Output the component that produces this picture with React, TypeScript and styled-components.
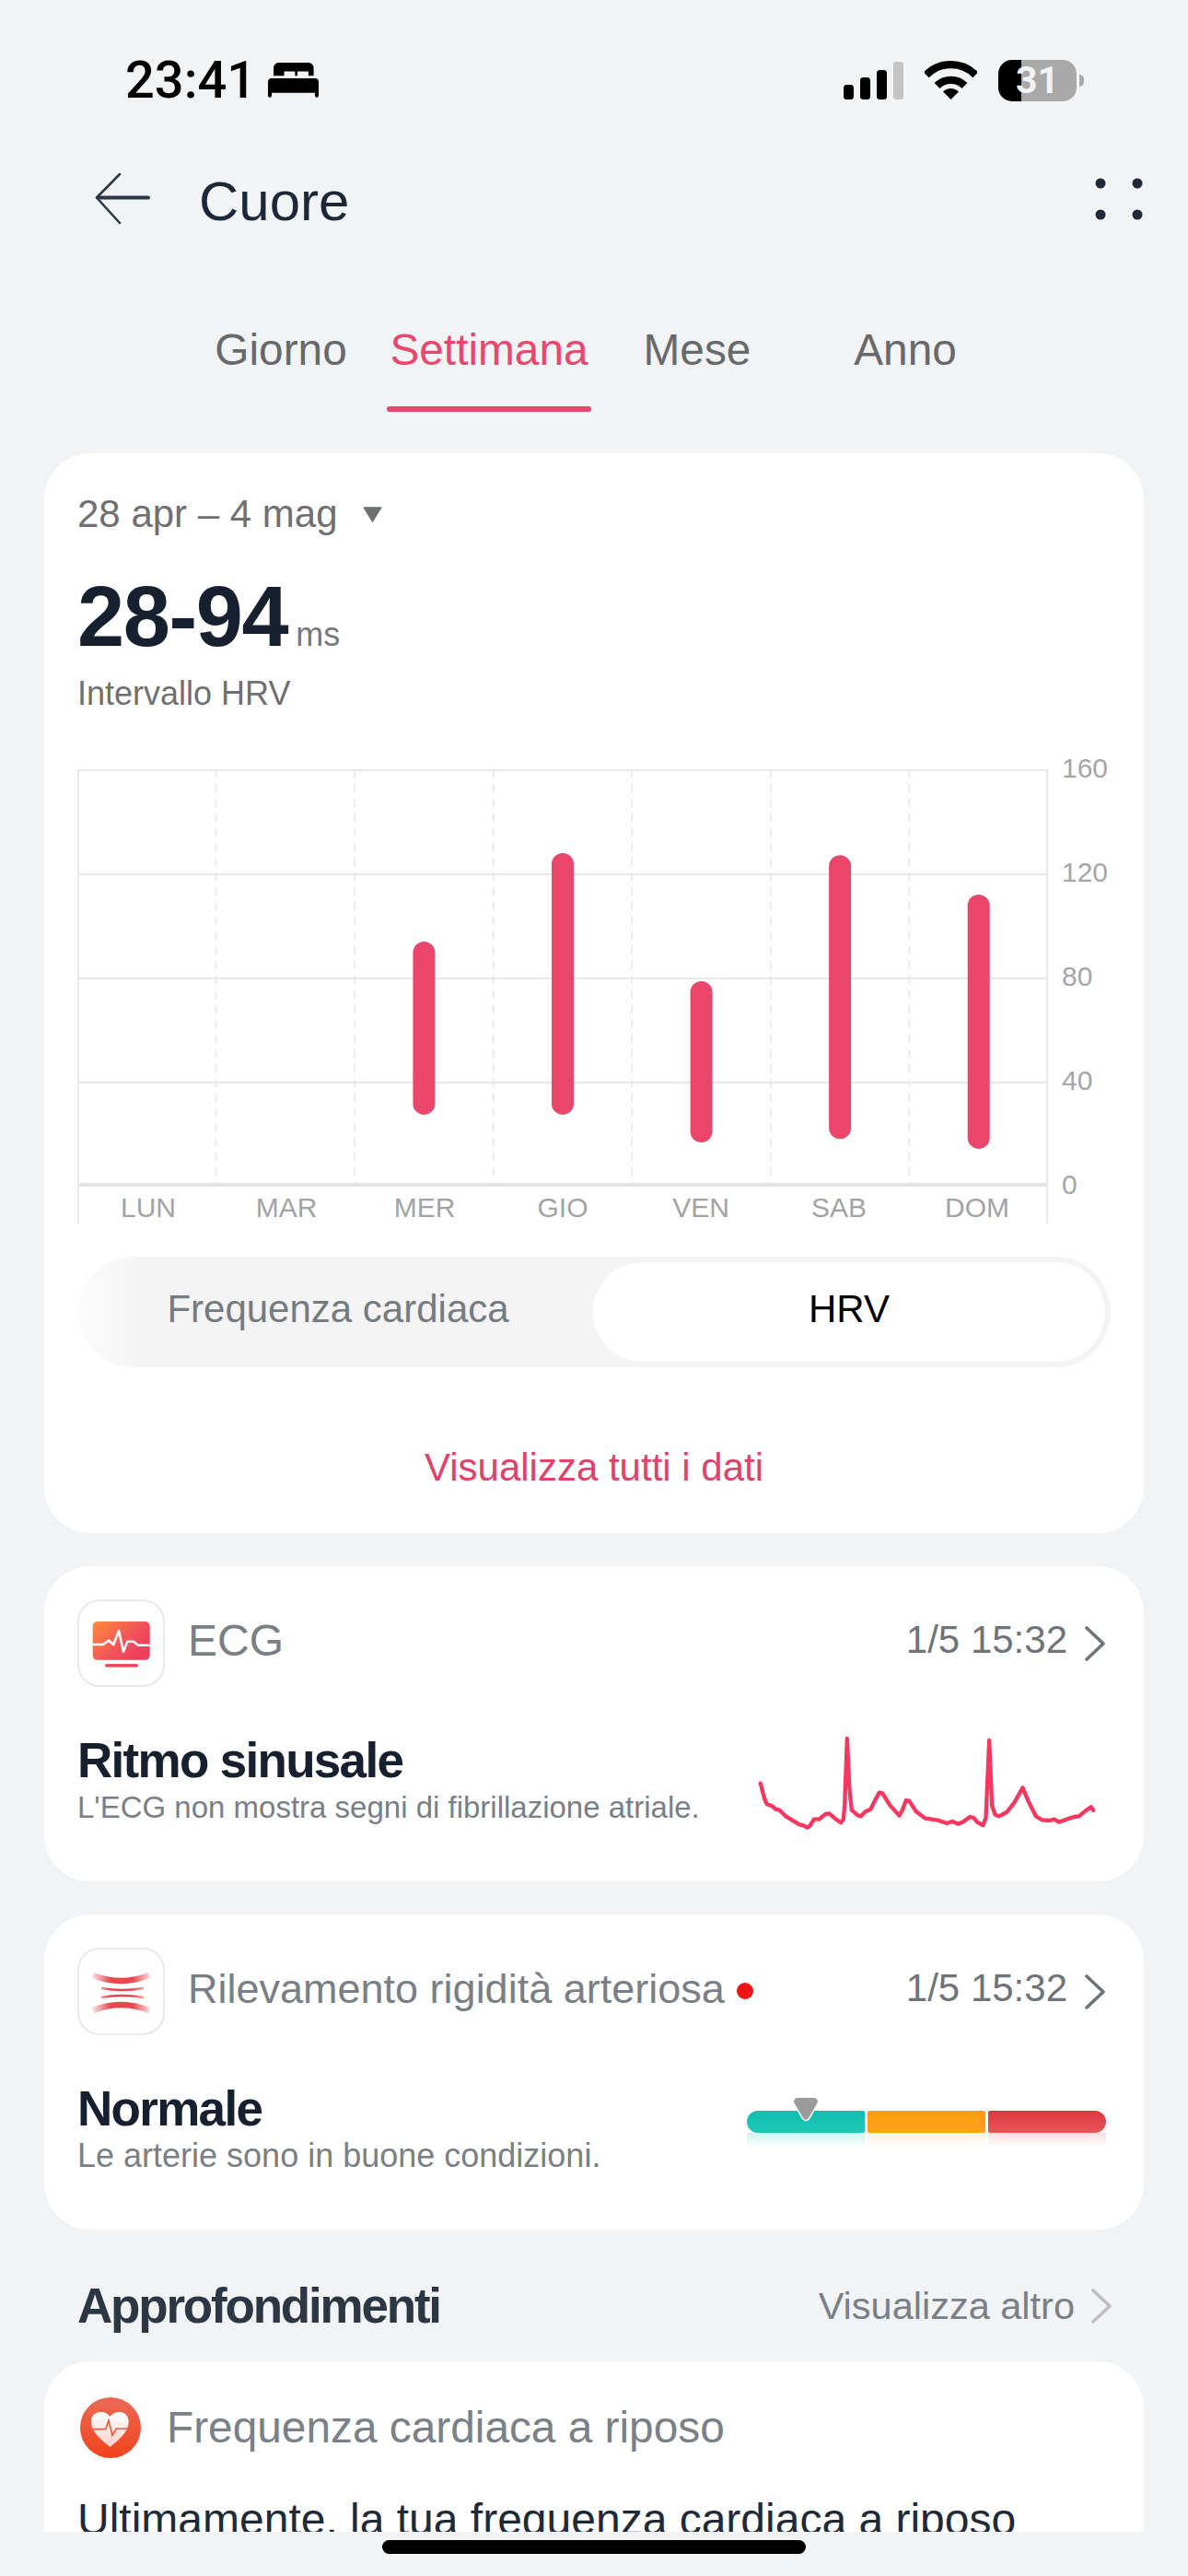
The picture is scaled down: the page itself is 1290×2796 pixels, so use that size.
import React from "react";
import styled, { createGlobalStyle } from "styled-components";

const Global = createGlobalStyle`
  html, body { margin: 0; padding: 0; background: #f2f3f5; }
  * { box-sizing: border-box; }
  body { font-family: "Liberation Sans", Arial, sans-serif; }
`;

const Page = styled.div`
  width: 1290px;
  height: 2796px;
  display: flex;
  flex-direction: column;
  background: #f2f3f5;
  overflow: hidden;
`;
const Main = styled.main`
  height: 2748px;
  overflow: hidden;
  flex: none;
`;
const StatusBar = styled.header`
  height: 174px;
  padding: 0 113px 0 136px;
  display: flex;
  align-items: center;
  justify-content: space-between;
`;
const TimeGroup = styled.div`
  display: flex;
  align-items: center;
  gap: 13px;
`;
const Time = styled.span`
  font-family: Roboto, sans-serif;
  font-weight: 500;
  font-size: 56px;
  line-height: 60px;
  color: #000;
`;
const StatusIcons = styled.div`
  display: flex;
  align-items: center;
  gap: 23px;
`;
const Battery = styled.div`
  position: relative;
  width: 85px;
  height: 45px;
  border-radius: 15px;
  background: linear-gradient(90deg, #000 0 30%, #a9a9a9 30% 100%);
  color: #f2f3f5;
  font-family: Roboto, sans-serif;
  font-weight: 700;
  font-size: 41px;
  line-height: 45px;
  text-align: center;
  margin-right: 8px;
  &::after {
    content: "";
    position: absolute;
    left: 88px;
    top: 16px;
    width: 5px;
    height: 13px;
    border-radius: 0 6px 6px 0;
    background: #a9a9a9;
  }
`;
const TitleBar = styled.div`
  height: 84px;
  padding: 0 49px 0 103px;
  display: flex;
  align-items: center;
`;
const Title = styled.h1`
  margin: 6px 0 0 53px;
  flex: 1;
  font-size: 60px;
  line-height: 70px;
  font-weight: 400;
  color: #1c2838;
`;
const Tabs = styled.nav`
  margin: 96px 0 0 192px;
  display: grid;
  grid-template-columns: repeat(4, 226px);
`;
const Tab = styled.div<{ $active?: boolean }>`
  display: flex;
  flex-direction: column;
  align-items: center;
  font-size: 47.8px;
  line-height: 56px;
  margin-top: -2px;
  color: ${(p) => (p.$active ? "#e8486e" : "#68696c")};
  &::after {
    content: "";
    display: block;
    margin-top: 33px;
    width: 222px;
    height: 6px;
    border-radius: 3px;
    background: ${(p) => (p.$active ? "#e8486e" : "transparent")};
  }
`;
const Card = styled.section`
  margin: 0 48px;
  width: 1194px;
  background: #fff;
  border-radius: 50px;
  padding: 0 36px;
`;
const ChartCard = styled(Card)`
  margin-top: 45px;
  padding-top: 41px;
  padding-bottom: 46px;
`;
const DateRow = styled.div`
  display: flex;
  align-items: center;
  gap: 26px;
  font-size: 42px;
  line-height: 50px;
  color: #6f7072;
`;
const BigRow = styled.div`
  margin-top: 36px;
  display: flex;
  align-items: baseline;
  gap: 9px;
`;
const BigValue = styled.span`
  font-size: 92px;
  line-height: 100px;
  font-weight: 700;
  letter-spacing: -1.4px;
  color: #16202e;
`;
const Unit = styled.span`
  font-size: 36px;
  color: #77787b;
`;
const Caption = styled.div`
  margin-top: 12px;
  font-size: 36px;
  line-height: 44px;
  color: #6f7072;
`;
const ChartGrid = styled.div`
  margin-top: 60px;
  display: grid;
  grid-template-columns: 1054px 1fr;
  column-gap: 15px;
`;
const PlotSvg = styled.svg`
  display: block;
  overflow: visible;
`;
const DayRow = styled.div`
  height: 41px;
  display: grid;
  grid-template-columns: repeat(7, 1fr);
  border-left: 2px solid #e8e8ea;
  border-right: 2px solid #e8e8ea;
`;
const Day = styled.span`
  text-align: center;
  font-size: 30px;
  line-height: 38px;
  padding-top: 5px;
  color: #a3a3a5;
`;
const Axis = styled.div`
  height: 493px;
  margin-top: -58px;
  display: flex;
  flex-direction: column;
`;
const Tick = styled.span`
  flex: none;
  height: 113px;
  line-height: 113px;
  font-size: 30px;
  color: #a6a6a8;
`;
const Segmented = styled.div`
  margin-top: 36px;
  height: 120px;
  border-radius: 60px;
  padding: 6px 6px 6px 6px;
  display: grid;
  grid-template-columns: 554px 556px;
  background: linear-gradient(90deg, #fcfcfc 0, #f4f4f5 6%);
`;
const Segment = styled.div<{ $on?: boolean }>`
  display: flex;
  align-items: center;
  justify-content: center;
  padding-bottom: 6px;
  border-radius: 54px;
  font-size: 42px;
  background: ${(p) => (p.$on ? "#fff" : "transparent")};
  color: ${(p) => (p.$on ? "#000" : "#757b80")};
`;
const AllLink = styled.div`
  margin-top: 84px;
  text-align: center;
  font-size: 42px;
  line-height: 50px;
  color: #e0426a;
`;
const InfoCard = styled(Card)`
  margin-top: 36px;
  height: 342px;
  padding-top: 36px;
`;
const InfoHead = styled.div`
  display: flex;
  align-items: center;
  height: 95px;
`;
const IconBox = styled.div`
  width: 95px;
  height: 95px;
  flex: none;
  border: 2px solid #e9e9eb;
  border-radius: 24px;
  margin-right: 25px;
  display: flex;
`;
const InfoTitle = styled.span<{ $size: number }>`
  font-size: ${(p) => p.$size}px;
  line-height: 54px;
  padding-bottom: 6px;
  color: #7a7f85;
`;
const RedDot = styled.span`
  width: 18px;
  height: 18px;
  border-radius: 50%;
  background: #f01414;
  margin-left: 13px;
  margin-top: -2px;
`;
const Stamp = styled.span`
  margin-left: auto;
  font-size: 42px;
  line-height: 50px;
  padding-bottom: 8px;
  color: #6f7479;
`;
const ChevronWrap = styled.span`
  display: flex;
  margin: 0 6px 0 19px;
`;
const InfoBody = styled.div`
  margin-top: 51px;
  display: flex;
  justify-content: space-between;
  align-items: flex-start;
`;
const Headline = styled.div`
  font-size: 53px;
  line-height: 57px;
  font-weight: 700;
  letter-spacing: -1.7px;
  color: #16202e;
`;
const SubLine = styled.div<{ $gap: number; $size: number }>`
  margin-top: ${(p) => p.$gap}px;
  font-size: ${(p) => p.$size}px;
  line-height: 40px;
  color: #7a7f85;
`;
const Spark = styled.svg`
  display: block;
  margin: 1px 16px 0 0;
`;
const Meter = styled.div`
  position: relative;
  margin: 16px 5px 0 0;
  width: 390px;
  padding-top: 15px;
  display: flex;
  gap: 3px;
`;
const MeterPart = styled.div<{ $from: string; $to: string; $tint: string; $radius: string }>`
  position: relative;
  flex: 1;
  height: 24px;
  border-radius: ${(p) => p.$radius};
  background: linear-gradient(180deg, ${(p) => p.$from}, ${(p) => p.$to});
  &::after {
    content: "";
    position: absolute;
    left: 0;
    right: 0;
    top: 24px;
    height: 17px;
    background: linear-gradient(180deg, ${(p) => p.$tint}, transparent);
  }
`;
const MeterMark = styled.svg`
  position: absolute;
  left: 45px;
  top: -2px;
`;
const SectionHead = styled.div`
  margin-top: 53px;
  padding: 0 83px 0 84px;
  height: 60px;
  display: flex;
  align-items: center;
  justify-content: space-between;
`;
const SectionTitle = styled.h2`
  margin: 0;
  font-size: 53px;
  line-height: 60px;
  font-weight: 700;
  letter-spacing: -2.2px;
  color: #2c3744;
`;
const MoreLink = styled.div`
  display: flex;
  align-items: center;
  gap: 18px;
  font-size: 41.5px;
  color: #7a8087;
`;
const InsightCard = styled(Card)`
  margin-top: 30px;
  padding-top: 39px;
  min-height: 400px;
`;
const InsightHead = styled.div`
  display: flex;
  align-items: center;
  gap: 28px;
  padding-left: 3px;
`;
const InsightTitle = styled.span`
  font-size: 47.8px;
  line-height: 56px;
  color: #7a8087;
`;
const InsightText = styled.p`
  margin: 39px 0 0;
  font-size: 48px;
  line-height: 56px;
  color: #1f2a38;
`;
const HomeZone = styled.div`
  flex: 1;
  display: flex;
  justify-content: center;
  padding-top: 9px;
`;
const HomeBar = styled.div`
  width: 460px;
  height: 15px;
  border-radius: 8px;
  background: #000;
`;

const days = ["LUN", "MAR", "MER", "GIO", "VEN", "SAB", "DOM"];
const ticks = [160, 120, 80, 40, 0];
const bars: { day: number; lo: number; hi: number }[] = [
  { day: 2, lo: 27.3, hi: 93.8 },
  { day: 3, lo: 27.3, hi: 127.8 },
  { day: 4, lo: 16.6, hi: 78.6 },
  { day: 5, lo: 18, hi: 127 },
  { day: 6, lo: 14.2, hi: 111.9 },
];
const ecgPoints =
  "78,228 90,275 98,295 115,302 128,312 140,315 160,335 185,350 205,362 218,365 230,372 240,365 252,345 268,345 290,328 302,326 320,342 340,356 348,345 352,300 360,82 368,250 375,315 395,332 405,335 420,320 437,312 450,285 465,258 475,260 500,300 530,333 540,315 552,283 562,285 585,320 615,342 655,348 685,358 703,352 722,360 740,352 760,337 772,340 785,355 803,364 812,340 823,88 832,300 842,330 855,335 880,322 905,290 932,242 950,285 975,335 995,347 1020,349 1035,345 1050,354 1075,345 1100,337 1115,335 1140,315 1155,305 1162,315";

const Chevron = ({ color = "#6f7479" }: { color?: string }) => (
  <svg width="22" height="38" viewBox="0 0 22 38" fill="none">
    <path d="M2 2 L20 19 L2 36" stroke={color} strokeWidth="3.6" strokeLinecap="round" strokeLinejoin="round" />
  </svg>
);

const Plot = () => (
  <PlotSvg width="1054" height="452" viewBox="0 0 1054 452">
    {[0, 113, 226, 339].map((y) => (
      <line key={y} x1="0" x2="1054" y1={y + 1} y2={y + 1} stroke="#e8e8ea" strokeWidth="2" />
    ))}
    <line x1="0" x2="1054" y1="451" y2="451" stroke="#e4e4e6" strokeWidth="4" />
    {[1, 2, 3, 4, 5, 6].map((i) => (
      <line key={i} x1={i * 150.57} x2={i * 150.57} y1="0" y2="450" stroke="#e6e6e8" strokeWidth="1.5" strokeDasharray="9 7" />
    ))}
    <line x1="1" x2="1" y1="0" y2="452" stroke="#e8e8ea" strokeWidth="2" />
    <line x1="1053" x2="1053" y1="0" y2="452" stroke="#e8e8ea" strokeWidth="2" />
    {bars.map((b) => (
      <rect
        key={b.day}
        x={(b.day + 0.5) * 150.57 - 12}
        y={452 - (b.hi * 452) / 160}
        width="24"
        height={((b.hi - b.lo) * 452) / 160}
        rx="12"
        fill="#ea466c"
      />
    ))}
  </PlotSvg>
);

const EcgIcon = () => (
  <svg width="91" height="91" viewBox="2 2 91 91">
    <defs>
      <linearGradient id="ecgFill" x1="0" y1="0" x2="1" y2="0.7">
        <stop offset="0" stopColor="#ff8c3c" />
        <stop offset="0.65" stopColor="#f0505a" />
        <stop offset="1" stopColor="#ee3d5a" />
      </linearGradient>
    </defs>
    <rect x="16.7" y="24" width="62" height="41.7" rx="5" fill="url(#ecgFill)" />
    <path
      d="M16.7 49 H27.7 L34.3 44.7 L39.3 49 L45 34 L50 56.7 L54.3 45.7 H61 L66 49.7 H78.7"
      fill="none"
      stroke="#fff"
      strokeWidth="2.6"
      strokeLinejoin="round"
    />
    <rect x="30" y="70" width="36" height="3.4" rx="1.7" fill="#ef4a55" />
  </svg>
);

const ArteryIcon = () => (
  <svg width="91" height="91" viewBox="2 2 91 91" fill="none">
    <defs>
      <linearGradient id="artery" gradientUnits="userSpaceOnUse" x1="15" y1="0" x2="81" y2="0">
        <stop offset="0" stopColor="#e8474c" stopOpacity="0.1" />
        <stop offset="0.32" stopColor="#e8474c" />
        <stop offset="0.68" stopColor="#e8474c" />
        <stop offset="1" stopColor="#e8474c" stopOpacity="0.1" />
      </linearGradient>
    </defs>
    <path d="M17 30 Q47 42 78 30" stroke="url(#artery)" strokeWidth="6.5" />
    <path d="M26 44 Q48 48 72 44" stroke="url(#artery)" strokeWidth="2.6" />
    <path d="M26 54 Q48 50 72 54" stroke="url(#artery)" strokeWidth="2.6" />
    <path d="M17 68 Q47 56 78 68" stroke="url(#artery)" strokeWidth="6.5" />
  </svg>
);

const HeartIcon = () => (
  <svg width="66" height="66" viewBox="0 0 66 66">
    <defs>
      <linearGradient id="heartBg" x1="0" y1="0" x2="0" y2="1">
        <stop offset="0" stopColor="#ec6a55" />
        <stop offset="1" stopColor="#f1431c" />
      </linearGradient>
      <linearGradient id="heartFg" x1="0" y1="0" x2="0" y2="1">
        <stop offset="0" stopColor="#ffffff" />
        <stop offset="1" stopColor="#fbd3ca" />
      </linearGradient>
    </defs>
    <circle cx="33" cy="33" r="33" fill="url(#heartBg)" />
    <path
      d="M32.5 21 C28 14 12 13 12 27 C12 38 24 47 32.5 54 C41 47 52.7 38 52.7 27 C52.7 13 37 14 32.5 21Z"
      fill="url(#heartFg)"
    />
    <path d="M12 34.7 H27.7 L31 25.3 L35 41.3 L39.3 34 H52.7" fill="none" stroke="#ec5a42" strokeWidth="1.7" />
  </svg>
);

export default function App() {
  return (
    <Page>
      <Global />
      <Main>
        <StatusBar>
          <TimeGroup>
            <Time>23:41</Time>
            <svg width="55" height="38" viewBox="0 0 163 112">
              <path
                fillRule="evenodd"
                d="M18 42 V16 A16 16 0 0 1 34 0 H131 A16 16 0 0 1 147 16 V42 H130 V28 H95 V42 H87 V28 H52 V42 Z"
              />
              <path d="M12 50 H151 A12 12 0 0 1 163 62 V106 A6 6 0 0 1 151 106 V97 H12 V106 A6 6 0 0 1 0 106 V62 A12 12 0 0 1 12 50Z" />
            </svg>
          </TimeGroup>
          <StatusIcons>
            <svg width="65" height="41" viewBox="0 0 65 41">
              <rect x="0" y="25" width="11" height="16" rx="3.5" />
              <rect x="18" y="17" width="11" height="24" rx="3.5" />
              <rect x="36" y="9" width="11" height="32" rx="3.5" />
              <rect x="54" y="0" width="11" height="41" rx="3.5" fill="#c4c4c4" />
            </svg>
            <svg width="57" height="42" viewBox="0 0 57 42" fill="none">
              <path d="M1.74 15.24A37.85 37.85 0 0 1 55.26 15.24" stroke="#000" strokeWidth="8.3" />
              <path d="M13.55 27.05A21.15 21.15 0 0 1 43.45 27.05" stroke="#000" strokeWidth="8.3" />
              <path d="M28.5 42 L20 33.5 A12 12 0 0 1 37 33.5Z" fill="#000" />
            </svg>
            <Battery>31</Battery>
          </StatusIcons>
        </StatusBar>
        <TitleBar>
          <svg width="60" height="56" viewBox="0 0 60 56" fill="none">
            <path d="M58 26.5 H3" stroke="#2d3745" strokeWidth="4" strokeLinecap="round" />
            <path d="M27 1 L2 26.5 L27 54" stroke="#2d3745" strokeWidth="2.6" strokeLinecap="round" strokeLinejoin="round" />
          </svg>
          <Title>Cuore</Title>
          <svg width="52" height="46" viewBox="0 0 52 46" fill="#1f2937">
            <circle cx="6" cy="6" r="5.5" />
            <circle cx="46" cy="6" r="5.5" />
            <circle cx="6" cy="40" r="5.5" />
            <circle cx="46" cy="40" r="5.5" />
          </svg>
        </TitleBar>
        <Tabs>
          <Tab>Giorno</Tab>
          <Tab $active>Settimana</Tab>
          <Tab>Mese</Tab>
          <Tab>Anno</Tab>
        </Tabs>
        <ChartCard>
          <DateRow>
            28 apr – 4 mag
            <svg width="23" height="17" viewBox="0 0 21 16">
              <path d="M2 1 H19 L10.5 15Z" fill="#6f7072" stroke="#6f7072" strokeWidth="1.5" strokeLinejoin="round" />
            </svg>
          </DateRow>
          <BigRow>
            <BigValue>28-94</BigValue>
            <Unit>ms</Unit>
          </BigRow>
          <Caption>Intervallo HRV</Caption>
          <ChartGrid>
            <div>
              <Plot />
              <DayRow>
                {days.map((d) => (
                  <Day key={d}>{d}</Day>
                ))}
              </DayRow>
            </div>
            <Axis>
              {ticks.map((t) => (
                <Tick key={t}>{t}</Tick>
              ))}
            </Axis>
          </ChartGrid>
          <Segmented>
            <Segment>Frequenza cardiaca</Segment>
            <Segment $on>HRV</Segment>
          </Segmented>
          <AllLink>Visualizza tutti i dati</AllLink>
        </ChartCard>
        <InfoCard>
          <InfoHead>
            <IconBox>
              <EcgIcon />
            </IconBox>
            <InfoTitle $size={48}>ECG</InfoTitle>
            <Stamp>1/5 15:32</Stamp>
            <ChevronWrap>
              <Chevron />
            </ChevronWrap>
          </InfoHead>
          <InfoBody>
            <div>
              <Headline>Ritmo sinusale</Headline>
              <SubLine $gap={3} $size={33}>L'ECG non mostra segni di fibrillazione atriale.</SubLine>
            </div>
            <Spark width="367" height="105" viewBox="70 70 1100 315" fill="none">
              <polyline points={ecgPoints} stroke="#f8375f" strokeWidth="13" strokeLinejoin="round" strokeLinecap="round" />
            </Spark>
          </InfoBody>
        </InfoCard>
        <InfoCard>
          <InfoHead>
            <IconBox>
              <ArteryIcon />
            </IconBox>
            <InfoTitle $size={45}>Rilevamento rigidità arteriosa</InfoTitle>
            <RedDot />
            <Stamp>1/5 15:32</Stamp>
            <ChevronWrap>
              <Chevron />
            </ChevronWrap>
          </InfoHead>
          <InfoBody>
            <div>
              <Headline>Normale</Headline>
              <SubLine $gap={3} $size={36}>Le arterie sono in buone condizioni.</SubLine>
            </div>
            <Meter>
              <MeterPart $from="#10bfae" $to="#20c6b7" $tint="rgba(32,198,183,.2)" $radius="12px 2px 2px 12px" />
              <MeterPart $from="#ff9b0e" $to="#ffa31c" $tint="rgba(255,163,28,.14)" $radius="2px" />
              <MeterPart $from="#df393d" $to="#e65759" $tint="rgba(230,87,89,.18)" $radius="2px 12px 12px 2px" />
              <MeterMark width="38" height="32" viewBox="0 0 38 32">
                <path
                  d="M10 3 H28 A4 4 0 0 1 31 9.5 L22 25 A3.5 3.5 0 0 1 16 25 L7 9.5 A4 4 0 0 1 10 3Z"
                  fill="#9b9b9b"
                  stroke="#fff"
                  strokeWidth="3"
                  paintOrder="stroke"
                />
              </MeterMark>
            </Meter>
          </InfoBody>
        </InfoCard>
        <SectionHead>
          <SectionTitle>Approfondimenti</SectionTitle>
          <MoreLink>
            Visualizza altro
            <Chevron color="#bfbfc1" />
          </MoreLink>
        </SectionHead>
        <InsightCard>
          <InsightHead>
            <HeartIcon />
            <InsightTitle>Frequenza cardiaca a riposo</InsightTitle>
          </InsightHead>
          <InsightText>Ultimamente, la tua frequenza cardiaca a riposo</InsightText>
        </InsightCard>
      </Main>
      <HomeZone>
        <HomeBar />
      </HomeZone>
    </Page>
  );
}
